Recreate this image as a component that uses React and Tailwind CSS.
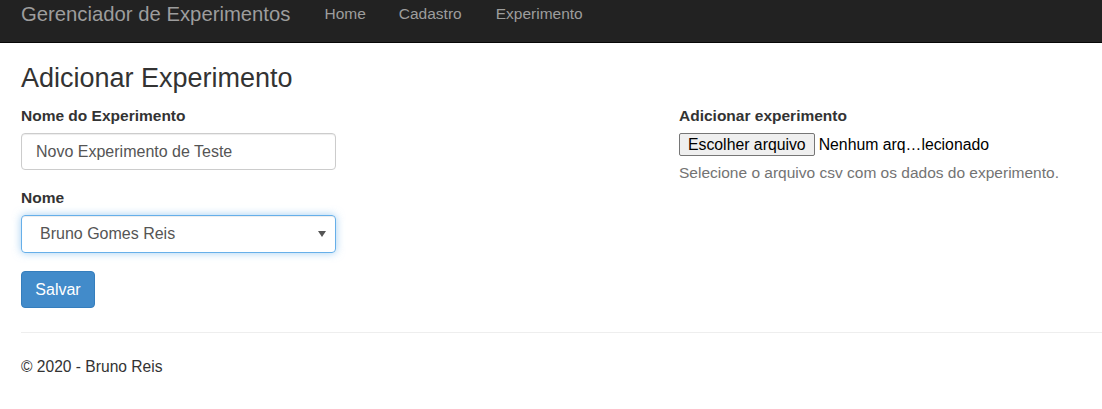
import React from 'react';

export default function App() {
  return (
    <div className="min-h-screen bg-white text-[#333] font-['Liberation_Sans',Arial,sans-serif] overflow-hidden">
      {/* Navbar */}
      <nav className="h-[43px] bg-[#222] border-b border-[#080808] flex items-center pl-[21px]">
        <span className="text-[20.3px] text-[#9d9d9d] -mt-[14px]">Gerenciador de Experimentos</span>
        <ul className="flex ml-[34px] -mt-[14px] text-[15.5px] text-[#9d9d9d]">
          <li className="mr-[33px]">Home</li>
          <li className="mr-[34px]">Cadastro</li>
          <li>Experimento</li>
        </ul>
      </nav>

      <div className="pl-[21px]">
        <h2 className="text-[27px] leading-[33px] mt-[19px] mb-[10px]">Adicionar Experimento</h2>

        <div className="flex">
          {/* Left column */}
          <div className="w-[658px] shrink-0">
            <label className="block font-bold text-[15.5px] leading-[22px] mb-[6px]">Nome do Experimento</label>
            <input
              type="text"
              defaultValue="Novo Experimento de Teste"
              className="w-[315px] h-[37px] px-[14px] text-[16px] text-[#555] border border-[#ccc] rounded-[4px] shadow-[inset_0_1px_1px_rgba(0,0,0,0.075)] outline-none"
            />

            <label className="block font-bold text-[15.5px] leading-[22px] mt-[17px] mb-[6px]">Nome</label>
            <div className="relative w-[315px]">
              <div className="h-[38px] px-[18px] flex items-center text-[16px] text-[#555] border border-[#66afe9] rounded-[4px] shadow-[inset_0_1px_1px_rgba(0,0,0,0.075),0_0_8px_rgba(102,175,233,0.6)]">
                Bruno Gomes Reis
              </div>
              <svg className="absolute right-[10px] top-[16px]" width="8" height="6" viewBox="0 0 8 6">
                <path d="M0 0 L8 0 L4 6 Z" fill="#555" />
              </svg>
            </div>

            <button className="mt-[18px] h-[37px] w-[74px] bg-[#428bca] border border-[#357ebd] rounded-[4px] text-white text-[16px]">
              Salvar
            </button>
          </div>

          {/* Right column */}
          <div>
            <label className="block font-bold text-[15.5px] leading-[22px] mb-[6px]">Adicionar experimento</label>
            <div className="flex items-center text-[15.8px] text-black">
              <span className="h-[23px] px-[8px] flex items-center bg-[#efefef] border border-[#767676] rounded-[2px]">
                Escolher arquivo
              </span>
              <span className="ml-[4px]">Nenhum arq…lecionado</span>
            </div>
            <p className="mt-[4px] text-[15.5px] text-[#737373]">Selecione o arquivo csv com os dados do experimento.</p>
          </div>
        </div>

        <hr className="mt-[24px] border-t border-[#eee]" />
        <footer className="mt-[22px] text-[15.6px]">© 2020 - Bruno Reis</footer>
      </div>
    </div>
  );
}
